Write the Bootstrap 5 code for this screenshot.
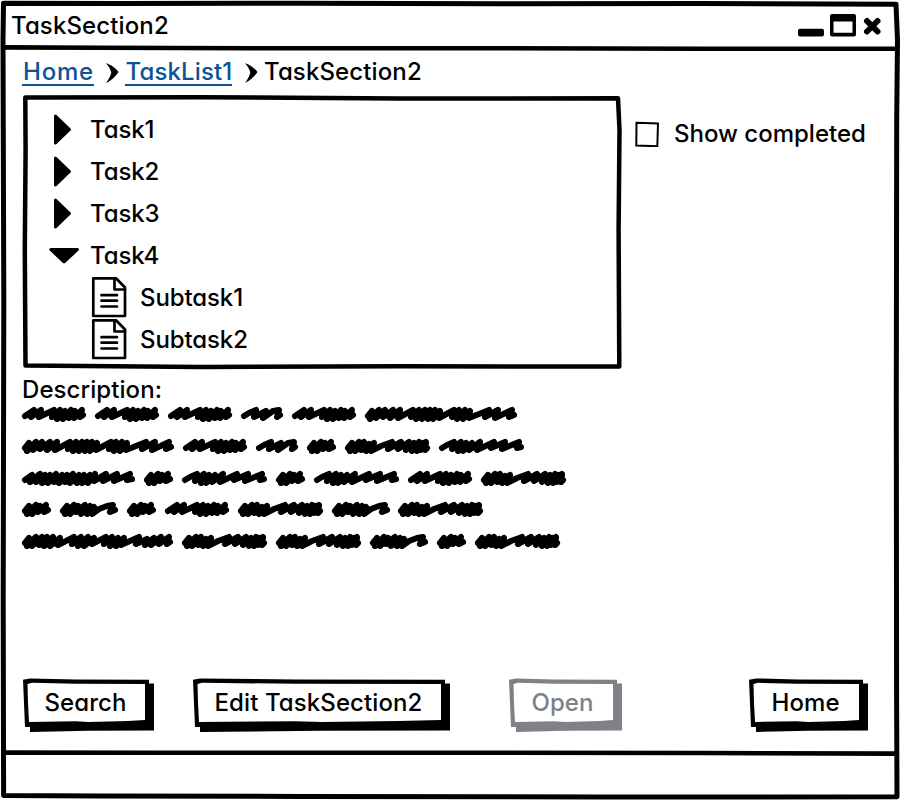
<!DOCTYPE html>
<html lang="en">
<head>
<meta charset="utf-8">
<meta name="viewport" content="width=device-width, initial-scale=1">
<title>TaskSection2</title>
<link href="https://cdn.jsdelivr.net/npm/bootstrap@5.3.0/dist/css/bootstrap.min.css" rel="stylesheet">
<style>
  body { font-family: Inter, "Open Sans", sans-serif; font-size: 24px; line-height: 32px; font-weight: 450; font-feature-settings: "cv11"; color: #000; background: #fff; overflow: hidden; }
  .window { width: 900px; height: 800px; }
  .frame { position: absolute; left: 0; top: 0; width: 100%; height: 100%; z-index: 0; overflow: visible; }
  .titlebar { height: 50px; padding: 1px 18px 0 11px; }
  .t-title, .c-cur { letter-spacing: .12px; }
  .main-area { height: 702px; padding: 6px 31px 0 22px; }
  .crumbs { height: 40px; }
  .crumbs a { color: #0b5394; text-decoration: none; border-bottom: 2px solid #0b5394; line-height: 32px; height: 30px; }
  .crumbs .c-home { letter-spacing: .8px; padding-left: 1px; }
  .crumbs .c-list { letter-spacing: .15px; }
  .crumbs svg { margin-left: 7.5px; }
  .tree { width: 599px; height: 274px; padding: 12px 0 0 26px; }
  .tree li { height: 42px; }
  .tree li span { padding-top: 1px; }
  .tree .t-task { letter-spacing: -.1px; }
  .tree .t-sub { letter-spacing: -.1px; }
  .tree .tw { width: 42px; }
  .tree .sub { padding-left: 42px; }
  .tree .doc { width: 50px; }
  .show-done { margin-left: 14px; padding-top: 22px; }
  .check-box { margin: 3px 15px 0 0; }
  .desc-label { height: 32px; margin-top: 3px; padding-top: 1px; letter-spacing: .08px; }
  .scribbles { padding-top: 2px; }
  .scribble { height: 31.8px; gap: 9px; }
  .scribble svg { overflow: visible; }
  .scribble path { fill: none; stroke: #000; stroke-width: 6.1; stroke-linecap: round; stroke-linejoin: round; }
  .sketch-btn { height: 54px; background: none; border: 0; color: #000; font: inherit; line-height: 50px; padding: 0 6px 4px 0; letter-spacing: .1px; }
  .sketch-btn:disabled { color: #808089; }
  .sketch-btn .edge { fill: currentColor; }
  .actions { height: 54px; margin-top: 112px; }
  .w-search { width: 131px; margin-left: 1px; } .w-edit { width: 257px; margin-left: 39px; } .w-open { width: 113px; margin-left: 59px; } .w-home { width: 119px; margin-left: 127px; }
</style>
<script src="https://cdn.jsdelivr.net/npm/bootstrap@5.3.0/dist/js/bootstrap.bundle.min.js"></script>
</head>
<body>
<div class="window position-relative overflow-hidden">
  <svg class="frame" viewBox="0 0 900 800" aria-hidden="true">
    <g fill="none" stroke="#000" stroke-width="5" stroke-linejoin="round">
      <path d="M3.500 3.200L120 3.500 300 3.300 500 3.800 700 3.600 896 4.200 897.500 40 896.700 120 896.300 400 896.600 700 897 796.800 600 797 300 796.400 100 796 3.600 795.500 3.200 600 3.800 300 3 40Z"/>
      <path stroke-width="4.600" d="M4 47.400L100 47.800 250 48.300 500 48.200 700 48.700 896 48.800"/>
      <path stroke-width="4.600" d="M4 752.600L150 752.800 400 752.700 700 753 896 753.600"/>
    </g>
  </svg>
  <header class="titlebar position-relative d-flex align-items-center justify-content-between">
    <span class="t-title">TaskSection2</span>
    <svg width="86" height="26" viewBox="796 12.500 86 26" aria-hidden="true">
      <rect x="798" y="28.300" width="26" height="7.600" rx="2"/>
      <path fill-rule="evenodd" d="M832 13.500h22q2 0 2 2v18.500q0 2-2 2h-22q-2 0-2-2v-18.500q0-2 2-2ZM833.500 21v11.300h19V21Z"/>
      <path d="M867 20.500L877.500 31M877.500 20.500L867 31" fill="none" stroke="#000" stroke-width="6" stroke-linecap="round"/>
    </svg>
  </header>

  <main class="main-area position-relative">
    <nav class="crumbs d-flex align-items-start" aria-label="breadcrumb">
      <a href="#" class="c-home">Home</a>
      <svg width="24" height="34" viewBox="101 56 24 34" aria-hidden="true"><path id="chev" d="M105.800 63.300C111 64.500 116 68.500 118.500 72 115.500 76.500 111 81 106 83 108.500 79.500 110.500 76 111.300 72.500 110.500 69 108.500 66 105.800 63.300Z"/></svg>
      <a href="#" class="c-list">TaskList1</a>
      <svg width="24" height="34" viewBox="101 56 24 34" aria-hidden="true"><use href="#chev"/></svg>
      <span class="c-cur">TaskSection2</span>
    </nav>

    <div class="d-flex">
      <div class="tree position-relative">
        <svg class="frame" viewBox="22 96 599 274" aria-hidden="true"><path d="M25.300 97.500L200 97.200 400 98.500 618 98.300 619.500 130 618.600 230 619.300 366.500 400 366.300 200 367 25.500 365.500 24.800 250 25.600 150Z" fill="none" stroke="#000" stroke-width="4.500" stroke-linejoin="round"/></svg>
        <ul class="list-unstyled m-0 position-relative">
          <li class="d-flex align-items-center"><svg class="tw" height="40" viewBox="0 0 42 40"><path id="tri" d="M7.500 7L21.500 20.500 7.500 34Z" stroke="#000" stroke-width="3" stroke-linejoin="round"/></svg><span class="t-task">Task1</span></li>
          <li class="d-flex align-items-center"><svg class="tw" height="40" viewBox="0 0 42 40"><use href="#tri"/></svg><span class="t-task">Task2</span></li>
          <li class="d-flex align-items-center"><svg class="tw" height="40" viewBox="0 0 42 40"><use href="#tri"/></svg><span class="t-task">Task3</span></li>
          <li class="d-flex align-items-center"><svg class="tw" height="40" viewBox="0 0 42 40"><path d="M2.800 14.500H29.500L16 27Z" stroke="#000" stroke-width="3" stroke-linejoin="round"/></svg><span class="t-task">Task4</span></li>
          <li class="sub d-flex align-items-center"><svg class="doc" height="42" viewBox="90 276 50 42"><g id="doc" fill="none" stroke="#000" stroke-width="2.700" stroke-linejoin="round" stroke-linecap="round"><path d="M93.300 278.300H116L125 287.500V316H93.300Z"/><path d="M114.500 278.500V289.500H125"/><path d="M101.500 295.200H117M101.500 300.700H117M101.500 306.500H117"/></g></svg><span class="t-sub">Subtask1</span></li>
          <li class="sub d-flex align-items-center"><svg class="doc" height="42" viewBox="90 276 50 42"><use href="#doc"/></svg><span class="t-sub">Subtask2</span></li>
        </ul>
      </div>
      <label class="show-done d-flex align-items-start"><svg class="check-box" width="24" height="26" viewBox="635 121 24 26" aria-hidden="true"><path d="M636.500 122.800L658 123.500 657.300 146.300 636.300 145.500Z" fill="none" stroke="#000" stroke-width="2"/></svg><span class="t-show">Show completed</span></label>
    </div>

    <div class="desc-label">Description:</div>
    <div class="scribbles" id="scribbles"></div>

    <div class="actions d-flex">
      <button class="sketch-btn w-search position-relative"><span class="position-relative z-1">Search</span></button>
      <button class="sketch-btn w-edit position-relative"><span class="position-relative z-1">Edit TaskSection2</span></button>
      <button class="sketch-btn w-open position-relative" disabled><span class="position-relative z-1">Open</span></button>
      <button class="sketch-btn w-home position-relative"><span class="position-relative z-1">Home</span></button>
    </div>
  </main>
</div>
<script>
  // Scribbled placeholder words: width and zigzag points
  const words = {
    A: [64, '3,9 12,3 9,10 19,3 17,10 32,3 30,10 38,3 35,12 43,4 41,12 49,3 47,11 53,4 52,11 60,3 58,10 61,8'],
    B: [42, '3,9 8,6 15,3 13,10 25,4 22,11 32,4 38,3 36,10 39,8'],
    C: [29, '3,9 7,4 5,12 14,3 10,12 18,4 16,10 24,3 22,10 26,8'],
    D: [57.5, '3,9 7,4 5,12 14,3 10,12 18,4 16,10 25,3 21,12 30,4 27,12 34,5 32,12 39,7 47,4 53,3 50,10 55,8'],
    E: [85, '3,9 7,4 5,12 14,3 10,12 19,3 16,11 24,5 21,12 29,4 26,12 36,7 47,3 43,10 56,3 53,10 64,3 61,11 69,4 67,12 74,3 72,12 78,4 76,11 81,3 80,11 82,9'],
    F: [85, '3,9 8,6 15,3 13,10 22,3 19,12 27,4 24,12 33,4 30,11 41,3 38,11 55,3 52,9 66,3 63,10 80,3 78,9 82,8'],
    G: [152, '3,9 7,4 5,12 14,3 11,11 20,3 18,10 28,3 25,11 35,3 33,11 48,3 46,10 54,3 51,12 60,3 57,12 65,3 63,12 70,3 68,12 75,4 74,11 89,3 87,10 94,3 92,12 100,3 98,12 105,4 104,11 124,3 120,10 133,3 130,11 147,3 144,10 149,8'],
    H: [113, '3,9 10,4 8,11 18,3 14,11 23,4 20,12 28,4 26,12 34,3 32,11 40,4 37,12 45,4 43,11 51,3 48,12 57,4 55,12 62,4 60,12 68,4 66,12 73,3 72,10 84,3 81,10 95,3 92,10 108,3 105,9 110,8'],
    I: [151, '3,9 7,4 5,12 14,3 10,12 20,3 17,11 25,3 22,12 31,3 28,12 38,4 36,11 52,3 50,10 59,3 56,12 66,3 62,12 72,4 70,10 84,3 82,10 90,3 88,12 96,4 94,12 102,4 99,11 117,3 114,10 125,5 123,11 132,4 129,11 139,3 137,10 147,3 145,10 148,8']
  };
  const rows = ['AAABAG', 'GABCEF', 'HCFCFAE', 'CDCAEDE', 'IEEDCE'];
  document.getElementById('scribbles').innerHTML = rows.map(r =>
    '<div class="scribble d-flex align-items-start">' + [...r].map(k =>
      `<svg width="${words[k][0]}" height="15" viewBox="0 0 ${words[k][0]} 15"><path d="M${words[k][1]}"/></svg>`).join('') + '</div>').join('');

  // Hand-drawn button outline with a solid shadow, sized to each button
  document.querySelectorAll('.sketch-btn').forEach(b => {
    const w = b.offsetWidth;
    b.insertAdjacentHTML('afterbegin', `<svg class="frame" viewBox="0 0 ${w} 54">
      <path class="edge" d="M0 1.800L7 .4 ${w * .4} 1.400 ${w - 5} 1.700V5.500H${w}V52.400L${w * .5} 52.700 7 54V49H2L1.200 30Z"/>
      <path fill="#fff" d="M4.500 6L9 4.800 ${w * .4} 5.800 ${w - 9} 6V42L${w * .8} 43 ${w * .5} 44 ${w * .4} 43.200 6 44 5 25Z"/></svg>`);
  });
</script>
</body>
</html>
